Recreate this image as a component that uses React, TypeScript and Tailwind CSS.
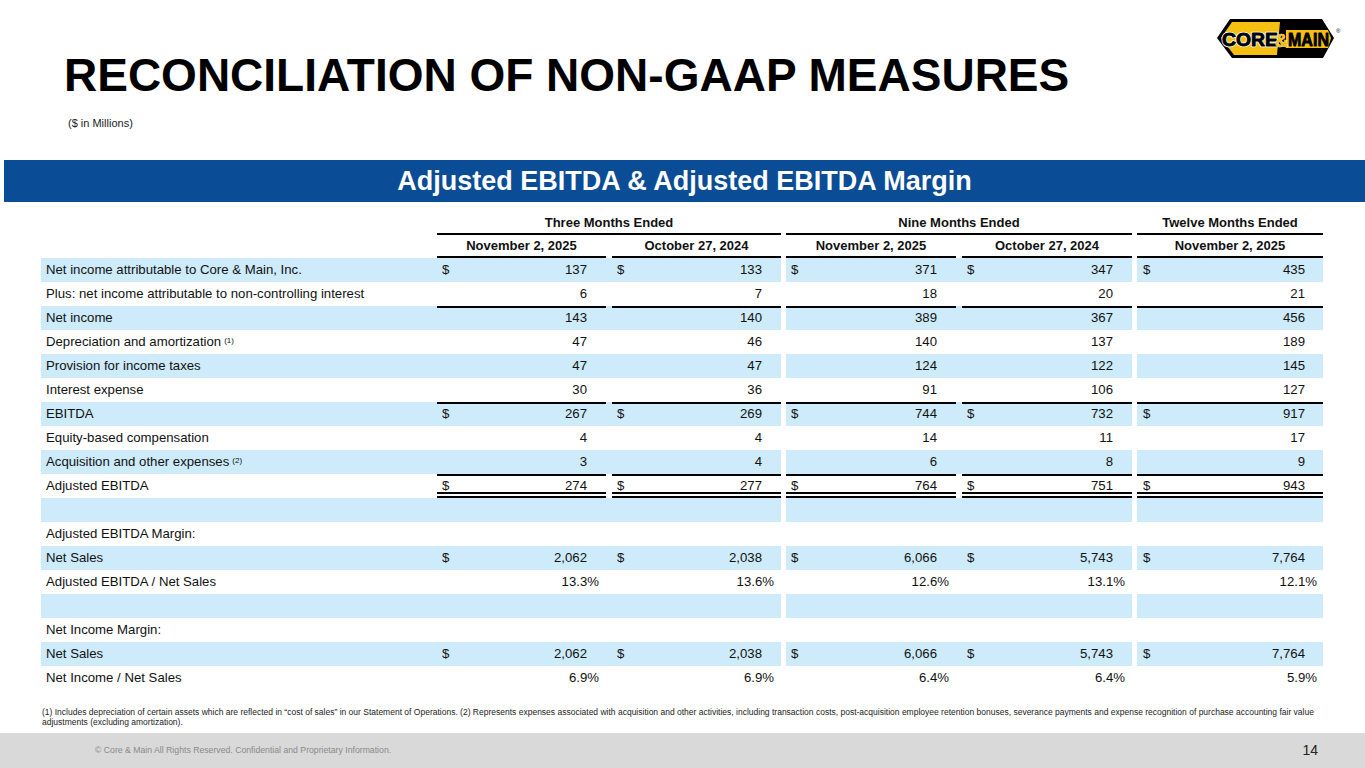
import React from 'react';

type Kind = 'num' | 'pct' | 'none';

interface RowData {
  label: string;
  sup?: string;
  values?: string[];
  dollar?: boolean;
  kind: Kind;
  shaded?: boolean;
  lineTop?: boolean;
  doubleBottom?: boolean;
}

const rows: RowData[] = [
  { label: 'Net income attributable to Core & Main, Inc.', values: ['137', '133', '371', '347', '435'], dollar: true, kind: 'num', shaded: true },
  { label: 'Plus: net income attributable to non-controlling interest', values: ['6', '7', '18', '20', '21'], kind: 'num' },
  { label: 'Net income', values: ['143', '140', '389', '367', '456'], kind: 'num', shaded: true, lineTop: true },
  { label: 'Depreciation and amortization', sup: '(1)', values: ['47', '46', '140', '137', '189'], kind: 'num' },
  { label: 'Provision for income taxes', values: ['47', '47', '124', '122', '145'], kind: 'num', shaded: true },
  { label: 'Interest expense', values: ['30', '36', '91', '106', '127'], kind: 'num' },
  { label: 'EBITDA', values: ['267', '269', '744', '732', '917'], dollar: true, kind: 'num', shaded: true, lineTop: true },
  { label: 'Equity-based compensation', values: ['4', '4', '14', '11', '17'], kind: 'num' },
  { label: 'Acquisition and other expenses', sup: '(2)', values: ['3', '4', '6', '8', '9'], kind: 'num', shaded: true },
  { label: 'Adjusted EBITDA', values: ['274', '277', '764', '751', '943'], dollar: true, kind: 'num', lineTop: true, doubleBottom: true },
  { label: '', kind: 'none', shaded: true },
  { label: 'Adjusted EBITDA Margin:', kind: 'none' },
  { label: 'Net Sales', values: ['2,062', '2,038', '6,066', '5,743', '7,764'], dollar: true, kind: 'num', shaded: true },
  { label: 'Adjusted EBITDA / Net Sales', values: ['13.3%', '13.6%', '12.6%', '13.1%', '12.1%'], kind: 'pct' },
  { label: '', kind: 'none', shaded: true },
  { label: 'Net Income Margin:', kind: 'none' },
  { label: 'Net Sales', values: ['2,062', '2,038', '6,066', '5,743', '7,764'], dollar: true, kind: 'num', shaded: true },
  { label: 'Net Income / Net Sales', values: ['6.9%', '6.9%', '6.4%', '6.4%', '5.9%'], kind: 'pct' },
];

// column widths and the inset of the rule lines inside each column
const cols = [
  { w: 'w-[172px]', inset: 'left-0 right-[3px]' },
  { w: 'w-[172px]', inset: 'left-[3px] right-0' },
  { w: 'w-[173px]', inset: 'left-0 right-[3px]' },
  { w: 'w-[173px]', inset: 'left-[3px] right-0' },
  { w: 'w-[186px]', inset: 'left-0 right-0' },
];

const numPad = ['pr-[22px]', 'pr-[19px]', 'pr-[22px]', 'pr-[19px]', 'pr-[18px]'];
const pctPad = ['pr-[10px]', 'pr-[7px]', 'pr-[10px]', 'pr-[7px]', 'pr-[6px]'];
const dolPad = ['pl-[5px]', 'pl-[8px]', 'pl-[5px]', 'pl-[8px]', 'pl-[6px]'];

function Cell({ row, i }: { row: RowData; i: number }) {
  const col = cols[i];
  const v = row.values ? row.values[i] : '';
  return (
    <div className={`${col.w} relative h-full flex items-center`}>
      {row.lineTop && <div className={`absolute top-0 ${col.inset} h-[2px] bg-black`} />}
      {row.doubleBottom && (
        <div className={`absolute bottom-0 ${col.inset} flex flex-col gap-[2px]`}>
          <div className="h-[2px] bg-black" />
          <div className="h-[2px] bg-black" />
        </div>
      )}
      <div className={`flex-1 flex items-center justify-between ${dolPad[i]} ${row.kind === 'pct' ? pctPad[i] : numPad[i]}`}>
        <span>{row.dollar ? '$' : ''}</span>
        <span>{v}</span>
      </div>
    </div>
  );
}

function TableRow({ row }: { row: RowData }) {
  const shade = row.shaded ? 'bg-[#cdebfb]' : '';
  return (
    <div className="flex h-[24px] text-[13.2px] text-[#111]">
      <div className={`flex ${shade}`}>
        <div className="w-[396px] pl-[5px] flex items-center whitespace-nowrap">
          {row.label}
          {row.sup && <sup className="text-[8px] ml-[3px] relative -top-[1px]">{row.sup}</sup>}
        </div>
        <Cell row={row} i={0} />
        <Cell row={row} i={1} />
      </div>
      <div className={`ml-[5px] flex ${shade}`}>
        <Cell row={row} i={2} />
        <Cell row={row} i={3} />
      </div>
      <div className={`ml-[5px] flex ${shade}`}>
        <Cell row={row} i={4} />
      </div>
    </div>
  );
}

function Logo() {
  const ff = 'Liberation Sans, Arial, sans-serif';
  return (
    <svg width="130" height="46" viewBox="0 0 130 46">
      <polygon points="2,22 15,3 107,3 119,22 108,42 17,42" fill="#000" />
      <polygon points="6,22 17,6 65,6 62,39 19,39" fill="#f5c010" />
      <polygon points="71,14 113,14 116,22 113,32 71,32" fill="#f5c010" />
      {/* white outline under the heavy letters */}
      <text x="7" y="30" fontFamily={ff} fontWeight="700" fontSize="19" textLength="56" lengthAdjust="spacingAndGlyphs" fill="#fff" stroke="#fff" strokeWidth="2.4" strokeLinejoin="round">CORE</text>
      <text x="7" y="30" fontFamily={ff} fontWeight="700" fontSize="19" textLength="56" lengthAdjust="spacingAndGlyphs" fill="#000" stroke="#000" strokeWidth="0.9" strokeLinejoin="round">CORE</text>
      <text x="60" y="30.5" fontFamily={ff} fontWeight="700" fontSize="19" textLength="13" lengthAdjust="spacingAndGlyphs" fill="#f5c010" stroke="#fff" strokeWidth="0.7" paintOrder="stroke">&amp;</text>
      <text x="73" y="30" fontFamily={ff} fontWeight="700" fontSize="19" textLength="41" lengthAdjust="spacingAndGlyphs" fill="#000" stroke="#000" strokeWidth="0.9" strokeLinejoin="round">MAIN</text>
      <text x="121" y="17" fontFamily={ff} fontSize="6" fill="#000">®</text>
    </svg>
  );
}

export default function App() {
  return (
    <div className="w-[1365px] h-[768px] overflow-hidden bg-white flex flex-col font-['Liberation_Sans',Arial,sans-serif] text-black">
      {/* Header */}
      <div className="flex justify-between items-start">
        <div className="pl-[64px]">
          <h1 className="mt-[51px] text-[46px] leading-[48px] font-bold whitespace-nowrap">
            RECONCILIATION OF NON-GAAP MEASURES
          </h1>
          <p className="mt-[19px] pl-[4px] text-[11px] leading-[11px] text-[#222]">($ in Millions)</p>
        </div>
        <div className="mt-[16px] mr-[20px]">
          <Logo />
        </div>
      </div>

      {/* Banner */}
      <div className="mt-[31px] ml-[4px] h-[42px] bg-[#0a4c96] flex items-center justify-center text-white font-bold text-[27px]">
        Adjusted EBITDA &amp; Adjusted EBITDA Margin
      </div>

      {/* Table */}
      <div className="ml-[41px] mt-[10px] flex flex-col">
        <div className="flex h-[23px] text-[13px] font-bold text-[#111]">
          <div className="w-[396px]" />
          <div className="w-[344px] border-b-2 border-black flex items-center justify-center">Three Months Ended</div>
          <div className="ml-[5px] w-[346px] border-b-2 border-black flex items-center justify-center">Nine Months Ended</div>
          <div className="ml-[5px] w-[186px] border-b-2 border-black flex items-center justify-center">Twelve Months Ended</div>
        </div>
        <div className="flex h-[23px] text-[13px] font-bold text-[#111]">
          <div className="w-[396px]" />
          <div className="w-[172px] pr-[3px] flex"><div className="flex-1 border-b-2 border-black flex items-center justify-center">November 2, 2025</div></div>
          <div className="w-[172px] pl-[3px] flex"><div className="flex-1 border-b-2 border-black flex items-center justify-center">October 27, 2024</div></div>
          <div className="ml-[5px] w-[173px] pr-[3px] flex"><div className="flex-1 border-b-2 border-black flex items-center justify-center">November 2, 2025</div></div>
          <div className="w-[173px] pl-[3px] flex"><div className="flex-1 border-b-2 border-black flex items-center justify-center">October 27, 2024</div></div>
          <div className="ml-[5px] w-[186px] flex"><div className="flex-1 border-b-2 border-black flex items-center justify-center">November 2, 2025</div></div>
        </div>
        {rows.map((row, idx) => (
          <TableRow key={idx} row={row} />
        ))}
      </div>

      {/* Footnotes */}
      <div className="mt-[17px] pl-[42px] text-[8.5px] leading-[10px] text-[#222]">
        <p className="whitespace-nowrap">
          (1) Includes depreciation of certain assets which are reflected in “cost of sales” in our Statement of Operations. (2) Represents expenses associated with acquisition and other activities, including transaction costs, post-acquisition employee retention bonuses, severance payments and expense recognition of purchase accounting fair value
        </p>
        <p>adjustments (excluding amortization).</p>
      </div>

      {/* Footer */}
      <div className="mt-[6px] h-[35px] bg-[#d9d9d9] flex items-center justify-between pl-[95px] pr-[47px]">
        <span className="text-[8.7px] text-[#8a8a8a]">© Core &amp; Main  All Rights Reserved. Confidential and Proprietary Information.</span>
        <span className="text-[14px] text-[#222]">14</span>
      </div>
    </div>
  );
}
